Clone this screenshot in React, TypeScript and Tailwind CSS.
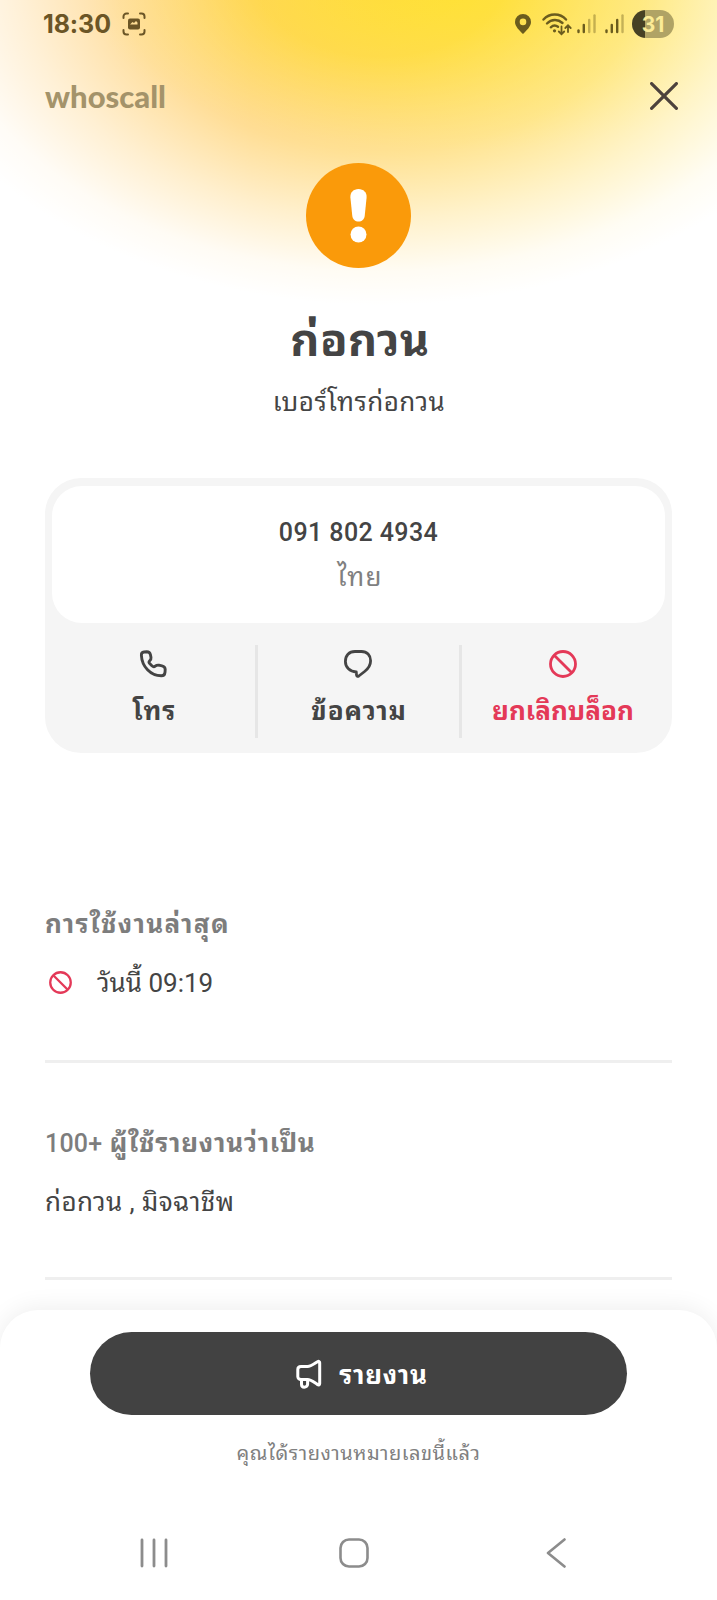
import type React from "react"

interface ActionProps {
  label: string
  icon: React.ReactNode
  className?: string
  labelClassName?: string
}

function BlockIcon({ className }: { className?: string }) {
  return (
    <svg viewBox="0 0 28 28" fill="none" stroke="currentColor" strokeWidth="2.8" className={className}>
      <circle cx="14" cy="14" r="12.5" />
      <path d="M5.2 5.2 22.8 22.8" />
    </svg>
  )
}

function PhoneIcon() {
  return (
    <svg viewBox="0 0 28 28" fill="none" stroke="currentColor" strokeWidth="2.9" strokeLinejoin="round" className="size-7">
      <path d="M2.4 5.5C2.2 3.4 3.2 2.2 5 2L7.800 1.800C9.800 1.800 11 2.800 11.400 4.500L12 7.500C12.200 9 11.600 9.900 10.700 10.800C9.700 11.800 9.900 12.800 10.900 13.800L12.900 15.800C14 16.800 15.200 17 16.200 16.200C17.300 15.300 18.400 15 19.900 15.200L23 15.800C25.200 16.300 26.200 17.500 26.200 19.500L26 22.300C25.800 24.500 24.600 25.800 22.300 25.800C11.500 25.700 3 16.600 2.400 5.500Z" />
    </svg>
  )
}

function ChatIcon() {
  return (
    <svg viewBox="0 0 28 28" fill="none" stroke="currentColor" strokeWidth="2.8" strokeLinejoin="round" className="size-7">
      <path d="M11 1.500H17.500C23 1.500 26.600 5.300 26.600 10.800C26.600 15.500 24.400 18.600 20.600 21.500L14.800 26C13.500 26.900 12.600 26.300 12.500 25L12.300 22C5.800 21.700 1.400 17.400 1.400 11.500C1.400 5.500 5 1.500 11 1.500Z" />
    </svg>
  )
}

function MegaphoneIcon() {
  return (
    <svg viewBox="0 0 26 30" fill="none" stroke="currentColor" strokeWidth="3" strokeLinejoin="round" className="h-[30px] w-[26px]">
      <path d="M5 7.500H11.500C15 7.500 18.500 4.500 21.500 2.700C22.800 2 23.700 2.500 23.700 3.700V24.500C23.700 25.900 22.700 26.200 21.600 25.600C18.500 23.800 15.500 20.500 11.500 20.500H5C3 20.500 1.800 19.400 1.800 17.500V10.500C1.800 8.600 3 7.500 5 7.500Z" />
      <path d="M5.500 20.500V25.300C5.500 27 6.600 28.200 8.300 28.200C10 28.200 11.600 27 11.600 25.300V20.500" />
    </svg>
  )
}

function Signal({ level }: { level: number }) {
  return (
    <svg viewBox="0 0 19 20" fill="none" stroke="#6b5c1e" strokeWidth="2.400" strokeLinecap="round" className="h-5 w-[19px]">
      <path d="M1.500 16.500V18" />
      <path d="M6.800 11V18" />
      <path d="M12.200 6V18" opacity={level > 2 ? 1 : 0.4} />
      <path d="M17.500 1.500V18" opacity="0.4" />
    </svg>
  )
}

function StatusBar() {
  return (
    <div className="flex h-12 items-center pr-[43px] pl-[43px] text-[#6b5526]">
      <span className="w-[70px] font-[Inter] text-[25px] leading-none font-bold tracking-[-0.1px]">18:30</span>
      <svg viewBox="0 0 24 24" fill="none" stroke="currentColor" strokeWidth="2" strokeLinecap="round" className="ml-[9px] size-6">
        <path d="M1.500 6V4.500A3 3 0 0 1 4.500 1.500H6M18 1.500h1.500a3 3 0 0 1 3 3V6M22.500 18v1.500a3 3 0 0 1-3 3H18M6 22.500H4.500a3 3 0 0 1-3-3V18" />
        <rect x="6" y="6.500" width="12" height="11" rx="2" fill="currentColor" stroke="none" />
        <path d="M8 12.500 10.500 10 12 11 14 9 15.500 10.500V12.500Z" fill="#fddc94" stroke="none" />
      </svg>
      <div className="ml-auto flex items-center">
        <svg viewBox="0 0 16 20" className="h-5 w-4">
          <path fillRule="evenodd" fill="#6b5c1e" d="M8 0a8 8 0 0 1 8 8c0 4.500-4.500 8.500-8 12C4.500 16.500 0 12.500 0 8a8 8 0 0 1 8-8Zm0 4.600a3.300 3.300 0 1 0 0 6.600 3.300 3.300 0 0 0 0-6.600Z" />
        </svg>
        <svg viewBox="0 0 30 24" fill="none" stroke="#6b5c1e" strokeWidth="2.400" strokeLinecap="round" className="ml-[11px] h-6 w-[30px]">
          <path d="M1.500 7.500C7.500 0.800 18 0.800 24 7.500" />
          <path d="M5 11.500C9.500 7 16 7 20.500 11" />
          <path d="M8.800 15.300C11 13.300 14 13.300 16 14.800" />
          <circle cx="12.500" cy="18.800" r="1.600" fill="#6b5c1e" stroke="none" />
          <path d="M19.500 14.500V22M16.800 19.500 19.500 22.200 22.200 19.500M26 20V13.500M23.300 16 26 13.300 28.700 16" strokeWidth="1.800" />
        </svg>
        <div className="ml-[5px] flex gap-[9px]">
          <Signal level={2} />
          <Signal level={3} />
        </div>
        <div className="ml-2 flex h-7 w-[42px] items-center justify-center rounded-full bg-[linear-gradient(90deg,#474124_31%,#b0a365_31%)] font-[Inter] text-[21px] leading-none font-bold text-[#fbeb96]">
          31
        </div>
      </div>
    </div>
  )
}

function Action({ label, icon, className = "flex-1", labelClassName = "" }: ActionProps) {
  return (
    <button className={`flex flex-col items-center pt-[27px] ${className}`}>
      {icon}
      <span className={`mt-[13px] text-[26px] leading-[40px] font-bold whitespace-nowrap ${labelClassName}`}>{label}</span>
    </button>
  )
}

export default function App() {
  return (
    <div className="flex h-[1600px] w-[717px] flex-col overflow-hidden bg-white font-[Roboto,'Noto_Sans_Thai_Looped','Noto_Looped_Thai',Loma,Waree,Garuda,sans-serif] text-[#444444]">
      <div className="flex h-[1310px] shrink-0 flex-col bg-[radial-gradient(490px_335px_at_380px_-30px,rgba(255,255,255,0)_0%,rgba(255,255,255,0.04)_26%,rgba(255,255,255,0.33)_54%,rgba(255,255,255,0.68)_74%,rgba(255,255,255,0.93)_90%,#fff_100%),radial-gradient(370px_150px_at_460px_0px,#ffe033_0%,rgba(255,224,51,0.6)_45%,rgba(255,224,51,0)_100%),linear-gradient(90deg,#ffd285_0%,#ffcd60_35%,#ffd55c_60%,#ffe056_100%)] bg-[length:717px_320px] bg-no-repeat">
        <StatusBar />

        <header className="flex h-[97px] items-center justify-between pr-[39px] pb-[1px] pl-[45px]">
          <span className="font-[Lato] text-[31px] leading-none font-black text-[#a4936a]">whoscall</span>
          <svg viewBox="0 0 28 28" stroke="#4d423c" strokeWidth="3.200" strokeLinecap="round" className="size-7">
            <path d="M1.600 1.600 26.400 26.400M26.400 1.600 1.600 26.400" />
          </svg>
        </header>

        <section className="flex h-[333px] flex-col items-center pt-[18px]">
          <svg viewBox="0 0 105 105" className="size-[105px]">
            <circle cx="52.500" cy="52.500" r="52.500" fill="#fa9a0a" />
            <path d="M52.500 26C57.500 26 61 29.500 60.600 34.500L58.700 53C58.300 56.500 55.800 58.500 52.500 58.500S46.700 56.500 46.300 53L44.400 34.500C44 29.500 47.500 26 52.500 26Z" fill="#fff" />
            <circle cx="52.500" cy="71.500" r="8" fill="#fff" />
          </svg>
          <h1 className="mt-[38px] pl-[3px] text-[45px] leading-[70px] font-bold tracking-[0.4px]">ก่อกวน</h1>
          <p className="mt-[6px] pl-[1px] text-[26px] leading-[40px] tracking-[0.5px]">เบอร์โทรก่อกวน</p>
        </section>

        <section className="mx-[45px] flex h-[275px] flex-col rounded-[36px] bg-[#f5f5f5] px-[7px] pt-2">
          <div className="flex h-[137px] flex-col items-center rounded-[30px] bg-white pt-[27px]">
            <span className="text-[25px] leading-[40px] font-medium tracking-[0.4px]">091 802 4934</span>
            <span className="mt-[4px] pl-[3px] text-[26px] leading-[40px] tracking-[1.2px] text-[#808080]">ไทย</span>
          </div>
          <div className="flex flex-1">
            <Action label="โทร" icon={<PhoneIcon />} className="flex-1 pr-[1px]" labelClassName="pl-[3px] tracking-[1px]" />
            <div className="mt-[22px] h-[93px] w-[3px] bg-[#e6e6e6]" />
            <Action label="ข้อความ" icon={<ChatIcon />} className="w-[201px] pr-[1px]" labelClassName="pl-[2px] tracking-[0.9px]" />
            <div className="mt-[22px] h-[93px] w-[3px] bg-[#e6e6e6]" />
            <Action label="ยกเลิกบล็อก" icon={<BlockIcon className="size-7" />} className="flex-1 pr-[1px] text-[#e43958]" />
          </div>
        </section>

        <section className="mx-[45px] mt-[151px] h-[159px] border-b-[3px] border-[#efefef]">
          <h2 className="text-[26px] leading-[40px] font-bold tracking-[1.3px] text-[#7d7d7d]">การใช้งานล่าสุด</h2>
          <div className="mt-[19px] flex items-center">
            <BlockIcon className="mb-[2px] ml-[4px] size-[23px] text-[#e43958]" />
            <span className="ml-[25px] text-[26px] leading-[40px]">วันนี้ 09:19</span>
          </div>
        </section>

        <section className="mx-[45px] mt-[60px] h-[157px] border-b-[3px] border-[#efefef]">
          <h2 className="text-[26px] leading-[40px] font-bold tracking-[0.8px] text-[#7d7d7d]">
            <span className="text-[25px] font-medium tracking-[0.2px]">100+</span> ผู้ใช้รายงานว่าเป็น
          </h2>
          <p className="mt-[18px] text-[26px] leading-[40px] tracking-[0.4px]">ก่อกวน , มิจฉาชีพ</p>
        </section>
      </div>

      <footer className="flex h-[290px] flex-col items-center rounded-t-[38px] bg-white pt-[22px] shadow-[0_-2px_24px_rgba(0,0,0,0.07)]">
        <button className="flex h-[83px] w-[537px] items-center justify-center gap-[17px] rounded-full bg-[#424242] pl-[7px] text-white">
          <MegaphoneIcon />
          <span className="mt-[3px] text-[26px] leading-[40px] font-bold tracking-[0.7px]">รายงาน</span>
        </button>
        <p className="mt-[20px] text-[20px] leading-[36px] tracking-[0.5px] text-[#808080]">คุณได้รายงานหมายเลขนี้แล้ว</p>
        <nav className="mt-[67px] flex w-full items-center pl-[140px] text-[#8c8c8c]">
          <svg viewBox="0 0 28 30" stroke="currentColor" strokeWidth="2.800" strokeLinecap="round" className="h-[30px] w-7">
            <path d="M2 2V28M14 2V28M26 2V28" />
          </svg>
          <svg viewBox="0 0 30 30" fill="none" stroke="currentColor" strokeWidth="2.600" className="ml-[171px] size-[30px]">
            <rect x="1.500" y="1.500" width="27" height="27" rx="8.500" />
          </svg>
          <svg viewBox="0 0 20 30" fill="none" stroke="currentColor" strokeWidth="2.600" strokeLinecap="round" strokeLinejoin="round" className="ml-[177px] h-[30px] w-5">
            <path d="M18.500 1.500 2 15 18.500 28.500" />
          </svg>
        </nav>
      </footer>
    </div>
  )
}
